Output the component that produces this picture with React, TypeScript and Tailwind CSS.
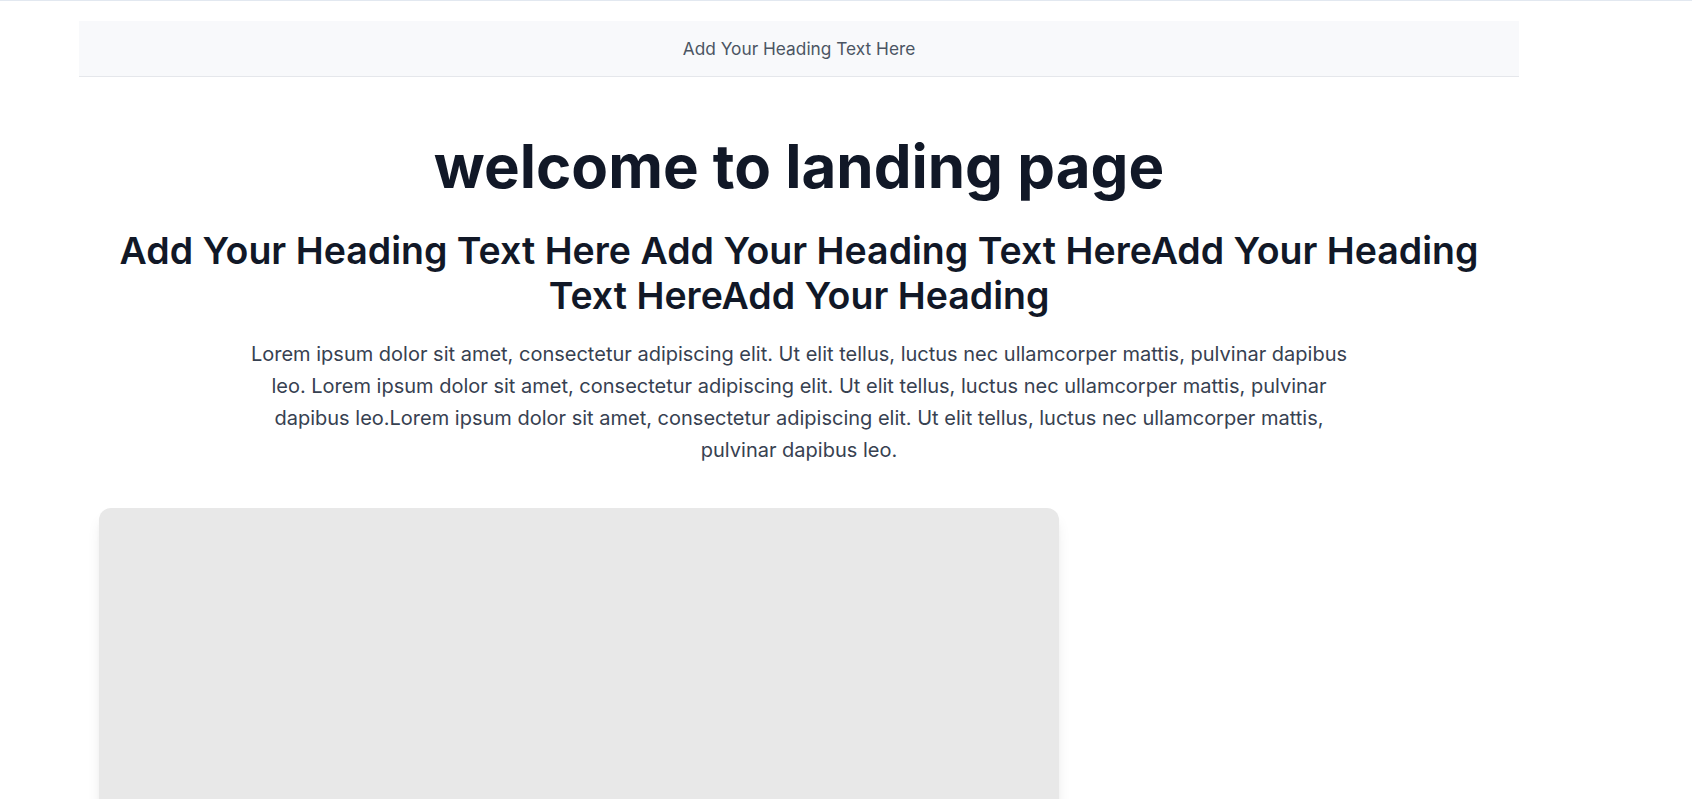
import React from "react";

const lorem =
  "Lorem ipsum dolor sit amet, consectetur adipiscing elit. Ut elit tellus, luctus nec ullamcorper mattis, pulvinar dapibus leo. Lorem ipsum dolor sit amet, consectetur adipiscing elit. Ut elit tellus, luctus nec ullamcorper mattis, pulvinar dapibus leo.Lorem ipsum dolor sit amet, consectetur adipiscing elit. Ut elit tellus, luctus nec ullamcorper mattis, pulvinar dapibus leo.";

const App: React.FC = () => {
  return (
    <div
      className="min-h-screen bg-white border-t border-[#e2e8f0]"
      style={{ fontFamily: "Inter, 'Noto Sans', sans-serif" }}
    >
      <div className="ml-[79px] w-[1440px] pt-[20px]">
        {/* top bar */}
        <header className="h-[56px] flex items-center justify-center bg-[#f8f9fb] border-b border-[#e5e7eb]">
          <span className="text-[17.3px] text-[#4b5563]">Add Your Heading Text Here</span>
        </header>

        <main className="px-5 pt-[59px] flex flex-col items-center">
          <h1 className="text-6xl font-bold text-[#111827] text-center">
            welcome to landing page
          </h1>
          <h2 className="mt-8 text-[37.5px] leading-[45px] font-semibold text-[#111827] text-center">
            Add Your Heading Text Here Add Your Heading Text HereAdd Your Heading Text HereAdd Your Heading
          </h2>
          <p className="mt-5 max-w-[1110px] text-xl leading-8 text-[#374151] text-center">
            {lorem}
          </p>

          <div className="self-start mt-[42px] w-[960px] h-[400px] rounded-xl bg-[#e8e8e8] shadow-lg" />
        </main>
      </div>
    </div>
  );
};

export default App;
